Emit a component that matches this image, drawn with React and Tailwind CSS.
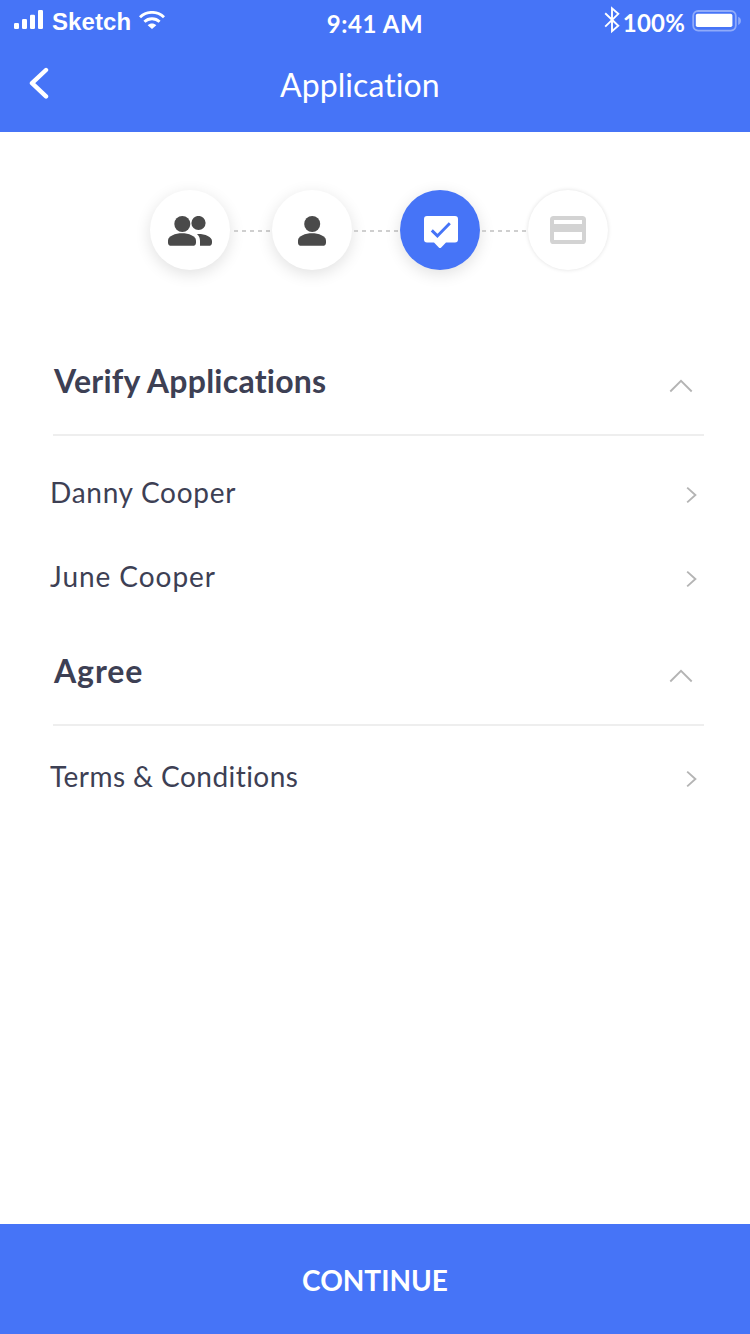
const Signal = () => (
  <svg className="w-[29px] h-[19px] block" viewBox="0 0 29 19" fill="#fff">
    <rect x="0" y="13" width="5" height="6" rx="1.2" />
    <rect x="8" y="9" width="5" height="10" rx="1.2" />
    <rect x="16" y="4.7" width="5" height="14.3" rx="1.2" />
    <rect x="24" y="0" width="5" height="19" rx="1.2" />
  </svg>
);

const Wifi = () => (
  <svg className="w-[26px] h-[18px] block" viewBox="0 0 26 18" fill="none" stroke="#fff" strokeWidth="2.9">
    <path d="M1 6.2C7.8-.2 18.2-.2 25 6.2" />
    <path d="M5.4 10.8C9.7 6.8 16.3 6.8 20.6 10.8" />
    <path d="M13 18 8.7 14.2C11.1 12 14.9 12 17.3 14.2Z" fill="#fff" stroke="none" />
  </svg>
);

const Bluetooth = () => (
  <svg className="w-[16px] h-[28px] block" viewBox="0 0 16 28" fill="none" stroke="#fff" strokeWidth="1.9">
    <path d="M1.2 7.2 14.3 19.7 8 25.2V2.4L14.3 7.9 1.2 20.6" />
  </svg>
);

const Battery = () => (
  <svg className="w-[50px] h-[22px] block" viewBox="0 0 50 22">
    <rect x="1.2" y="1" width="42.6" height="19.6" rx="5" fill="none" stroke="#fff" strokeOpacity=".4" strokeWidth="1.8" />
    <rect x="3.8" y="3.8" width="36.6" height="13.2" rx="1.8" fill="#fff" />
    <path d="M46.2 6.8C49.8 8 49.8 13.8 46.2 15Z" fill="#fff" fillOpacity=".4" />
  </svg>
);

const Body = () => (
  <path d="M0 24.5C0 20 7.5 17.3 14 17.3S28 20 28 24.5V26.4a3.4 3.4 0 0 1-3.4 3.4H3.4a3.4 3.4 0 0 1-3.4-3.4Z" />
);

const People = () => (
  <svg className="mt-[2px] w-[44px] h-[30px]" viewBox="0 0 44 30" fill="#4a4a4a">
    <circle cx="14.3" cy="8" r="8" />
    <circle cx="30.5" cy="7" r="7.1" />
    <Body />
    <path d="M29 17.9C36.5 17.6 44 20.3 44 25V26.4a3.4 3.4 0 0 1-3.4 3.4H32V25C32 22 31 19.7 29 17.9Z" />
  </svg>
);

const Person = () => (
  <svg className="mt-[2px] w-[28px] h-[30px]" viewBox="0 0 28 30" fill="#4a4a4a">
    <circle cx="14.2" cy="8" r="8" />
    <Body />
  </svg>
);

const Verified = () => (
  <svg className="ml-[2px] mt-[4px] w-[34px] h-[32px]" viewBox="0 0 34 32">
    <path d="M3 0H31a3 3 0 0 1 3 3V23.6a3 3 0 0 1-3 3H22L17.2 31.4Q16 32.4 14.8 31.4L10 26.6H3a3 3 0 0 1-3-3V3a3 3 0 0 1 3-3Z" fill="#fff" />
    <path d="M7.8 14.4 13.4 19.9 25.8 7.2" fill="none" stroke="#4674f7" strokeWidth="2.9" />
  </svg>
);

const Card = () => (
  <svg className="w-[36px] h-[28px]" viewBox="0 0 36 28">
    <rect x="2" y="2" width="32" height="24" rx="1.6" fill="#fff" stroke="#d3d3d3" strokeWidth="4" />
    <rect x="3" y="8" width="30" height="8" fill="#d3d3d3" />
  </svg>
);

const Dashes = ({ n }) => (
  <div className="mt-[2px] flex gap-1">
    {Array.from({ length: n }, (_, i) => (
      <span key={i} className="h-[2px] w-1 bg-[#cfcfcf]" />
    ))}
  </div>
);

const Step = ({ active, pending, children }) => (
  <div
    className={`flex size-20 items-center justify-center rounded-full ${
      active ? "bg-[#4674f7]" : "bg-white"
    } ${pending ? "shadow-[0_0_4px_rgba(0,0,0,0.12)]" : "shadow-[0_4px_16px_rgba(0,0,0,0.12)]"}`}
  >
    {children}
  </div>
);

const Section = ({ title, spacing }) => (
  <div className="ml-[53px] mr-[46px] flex h-[108px] items-start justify-between border-b-2 border-[#eeeeee] pr-[11px]">
    <h2 className={`pl-px text-[32px] font-bold leading-[106px] ${spacing}`}>{title}</h2>
    <svg className="mt-[51px] h-[14px] w-[24px]" viewBox="0 0 24 14" fill="none" stroke="#b4b4b4" strokeWidth="1.9">
      <path d="M1.3 12.5 12 1.9 22.7 12.5" />
    </svg>
  </div>
);

const Row = ({ label, spacing }) => (
  <div className="flex h-[84px] items-start justify-between pl-[50px] pr-[52px]">
    <span className={`text-[28px] leading-[86px] ${spacing}`}>{label}</span>
    <svg className="mt-[37px] h-[18px] w-[12px]" viewBox="0 0 12 18" fill="none" stroke="#b4b4b4" strokeWidth="1.9">
      <path d="M1.2 1.6 9.4 9 1.2 16.4" />
    </svg>
  </div>
);

export default function App() {
  return (
    <div className="flex h-[1334px] w-[750px] flex-col bg-white font-['Lato',sans-serif] text-[#3d4054]">
      <header className="h-[132px] bg-[#4674f7] text-white">
        <div className="grid h-11 grid-cols-3 whitespace-nowrap">
          <div className="flex items-start pl-[14px]">
            <div className="pt-[10px]"><Signal /></div>
            <span className="ml-[9px] font-['Liberation_Sans',sans-serif] text-[24px] font-bold leading-[43px] tracking-[0.1px]">Sketch</span>
            <div className="ml-[8px] pt-[11px]"><Wifi /></div>
          </div>
          <div className="text-center text-[24px] font-bold leading-[48px] tracking-[0.6px]">9:41 AM</div>
          <div className="flex items-start justify-end pr-[8px]">
            <div className="pt-[6px]"><Bluetooth /></div>
            <span className="ml-[3px] text-[24px] font-bold leading-[46px] tracking-[0.2px]">100%</span>
            <div className="ml-[7px] pt-[10px]"><Battery /></div>
          </div>
        </div>
        <div className="grid h-20 grid-cols-[280px_160px_1fr]">
          <svg className="ml-[29px] mt-[23px] h-[32px] w-[22px]" viewBox="0 0 22 32" fill="none" stroke="#fff" strokeWidth="4.4" strokeLinecap="round" strokeLinejoin="round">
            <path d="M17 3 3 16.2 17 29.4" />
          </svg>
          <h1 className="text-[32px] leading-[82px] tracking-[0.08px]">Application</h1>
        </div>
      </header>

      <div className="mt-[58px] flex h-20 items-center pl-[150px]">
        <Step><People /></Step>
        <div className="w-[42px] pl-1"><Dashes n={5} /></div>
        <Step><Person /></Step>
        <div className="w-[48px] pl-[2px]"><Dashes n={6} /></div>
        <Step active><Verified /></Step>
        <div className="w-[48px] pl-[2px]"><Dashes n={6} /></div>
        <Step pending><Card /></Step>
      </div>

      <main className="flex-1 pt-[58px]">
        <Section title="Verify Applications" spacing="tracking-[0.25px]" />
        <div className="pb-px pt-[13px]">
          <Row label="Danny Cooper" spacing="tracking-[0.72px]" />
          <Row label="June Cooper" spacing="tracking-[0.95px]" />
        </div>
        <Section title="Agree" spacing="tracking-[0.9px]" />
        <div className="pt-[7px]">
          <Row label="Terms & Conditions" spacing="tracking-[0.45px]" />
        </div>
      </main>

      <button className="h-[110px] w-full bg-[#4674f7] text-[28px] font-bold leading-[112px] text-white">
        CONTINUE
      </button>
    </div>
  );
}
